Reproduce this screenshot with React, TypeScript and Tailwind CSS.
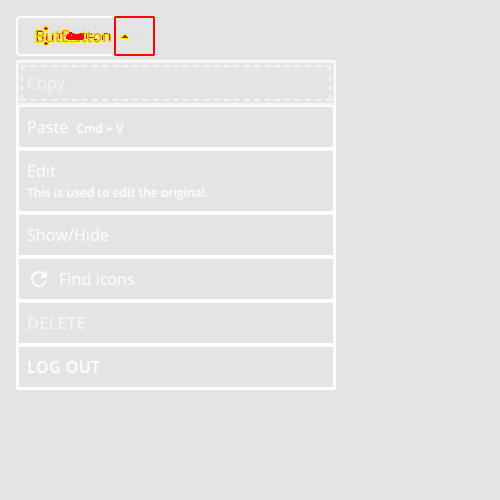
import React from "react";

const row = "box-border flex flex-col items-start justify-center border-2 border-white px-2 text-base leading-6 tracking-[0.09px] text-white";
const label = "absolute top-[6px] text-base leading-6 text-[#ff9000] [text-shadow:1px_0_0_#ffff00,-1px_0_0_#ffff00,0_1px_0_#ffff00]";

export default function App() {
  return (
    <div className="h-[500px] w-[500px] overflow-hidden bg-[#e4e4e4] p-4 font-['Open_Sans',sans-serif]">
      <div className="flex h-10 w-[139px]">
        <button className="relative h-10 w-[98px] rounded-l-sm border-2 border-r-0 border-white">
          <span className={`${label} left-[17px]`}>Button</span>
          <span className={`${label} left-[43px]`}>Button</span>
          <svg className="absolute left-0 top-0" width="96" height="36" shapeRendering="crispEdges">
            <path d="M26 8h4v1h1v3h-1v1h-4v-1h-1V9h1z M26 23h4v1h1v3h-1v1h-4v-1h-1v-3h1z" fill="#ff0" />
            <path d="M27 9h2v1h1v1h-1v1h-2v-1h-1v-1h1z M27 24h2v1h1v1h-1v1h-2v-1h-1v-1h1z" fill="#f00" />
            <path d="M20 16h2v1h-2z M22 21h2v1h-2z M26 15h1v3h-1z M30 16h1v5h-1z M33 14h1v2h-1z M36 20h2v1h-2z M39 16h1v2h-1z M72 15h1v3h-1z M87 16h2v1h-2z" fill="#ff0" />
            <path d="M19 13h5v1h-4v3h-1z M19 20h1v3h-1z M24 19h1v2h-1z M28 18h1v4h-1z M34 17h1v5h-1z M41 16h1v5h-1z M44 14h1v2h-1z M51 14h3v1h2v1h6v-1h2v1h2v5h-1v1H50v-1h-2v-3h1v-2h2z M68 16h1v5h-1z M71 19h4v1h-4z M73 15h1v2h-1z M76 21h3v1h-3z M84 17h1v5h-1z M86 15h3v1h-3z M91 16h1v6h-1z" fill="#f00" />
            <path d="M49 14h1v1h-1z M55 13h2v1h-2z M59 15h1v1h-1z M53 17h1v1h-1z M50 22h8v1h-8z" fill="#ff0" />
          </svg>
        </button>
        <button className="relative h-10 w-[41px] rounded-[1px] border-2 border-[#ff0000]">
          <svg className="absolute left-1 top-4" width="10" height="5" shapeRendering="crispEdges">
            <path d="M4 0h2v1h1v1h1v1h1v1h1v1H0V3h1V2h1V1h2z" fill="#ff0" />
            <path d="M4 1h2v1h1v1h1v1H2V3h1V2h1z" fill="#f00" />
          </svg>
          <span className="absolute -left-0.5 -top-0.5 h-px w-px bg-[#ffff00]" />
          <span className="absolute -right-0.5 -top-0.5 h-px w-px bg-[#ffff00]" />
          <span className="absolute -bottom-0.5 -left-0.5 h-px w-px bg-[#ffff00]" />
          <span className="absolute -bottom-0.5 -right-0.5 h-px w-px bg-[#ffff00]" />
        </button>
      </div>
      <div className="mt-1 w-80 rounded-[2px] border border-white">
        <div className={`${row} relative h-11 !border-[#f4f4f4]`}>
          <span className="text-[#f4f4f4]">Copy</span>
          <span className="absolute inset-0.5 border-2 border-dashed border-[#f4f4f4]" />
        </div>
        <div className={`${row} h-11`}>
          <span className="flex items-center gap-2">Paste <span className="pt-[3px] text-xs font-semibold leading-4 tracking-[0.03px]">Cmd + V</span></span>
        </div>
        <div className={`${row} h-16`}>
          <span className="-mt-0.5 mb-0.5 leading-6">Edit</span>
          <span className="text-xs font-semibold leading-4 tracking-[0.03px]">This is used to edit the original.</span>
        </div>
        <div className={`${row} h-11`}>Show/Hide</div>
        <div className={`${row} h-11`}>
          <span className="flex items-center gap-2">
            <svg width="24" height="24" viewBox="0 0 24 24" fill="currentColor" stroke="currentColor" strokeWidth=".1">
              <path d="M17.65 6.35A7.96 7.96 0 0 0 12 4a8 8 0 1 0 7.73 10h-2.08A6 6 0 1 1 12 6c1.66 0 3.14.69 4.22 1.78L13 11h7V4z" />
            </svg>
            Find icons
          </span>
        </div>
        <div className={`${row} h-11`}><span className="font-semibold tracking-[0.4px] text-[#f4f4f4]">DELETE</span></div>
        <div className={`${row} h-11`}><span className="font-semibold tracking-[0.4px]">LOG OUT</span></div>
      </div>
    </div>
  );
}
